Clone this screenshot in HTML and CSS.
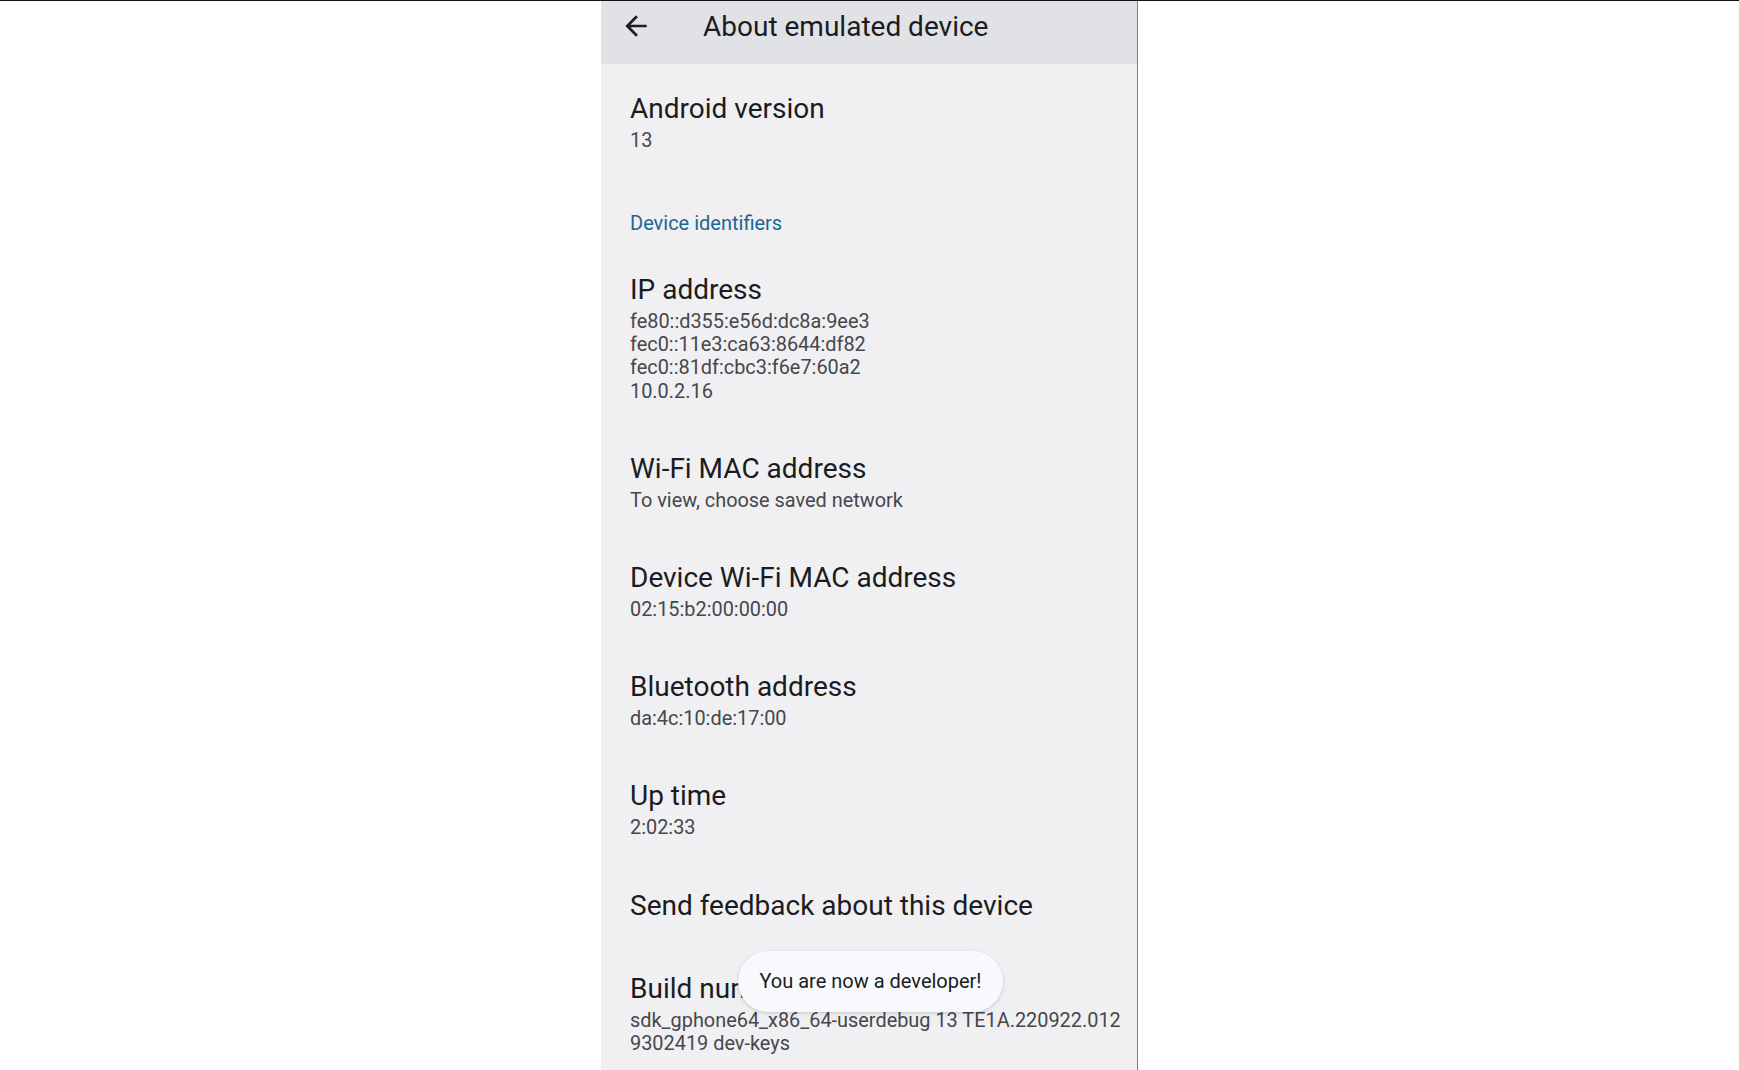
FILE: index.html
```html
<!DOCTYPE html>
<html lang="en">
<head>
<meta charset="utf-8">
<title>About emulated device</title>
<link rel="stylesheet" href="styles.css">
</head>
<body>
<div class="stage">
  <div class="phone">
    <header class="appbar">
      <svg class="back" viewBox="0 0 24 24" aria-hidden="true"><path d="M20 11H7.83l5.59-5.59L12 4l-8 8 8 8 1.41-1.41L7.83 13H20v-2z"/></svg>
      <h1 class="appbar-title">About emulated device</h1>
    </header>
    <main class="list">
      <div class="item">
        <div class="title">Android version</div>
        <div class="summary">13</div>
      </div>
      <div class="category">Device identifiers</div>
      <div class="item">
        <div class="title">IP address</div>
        <div class="summary">fe80::d355:e56d:dc8a:9ee3<br>fec0::11e3:ca63:8644:df82<br>fec0::81df:cbc3:f6e7:60a2<br>10.0.2.16</div>
      </div>
      <div class="item">
        <div class="title">Wi-Fi MAC address</div>
        <div class="summary">To view, choose saved network</div>
      </div>
      <div class="item">
        <div class="title">Device Wi-Fi MAC address</div>
        <div class="summary">02:15:b2:00:00:00</div>
      </div>
      <div class="item">
        <div class="title">Bluetooth address</div>
        <div class="summary">da:4c:10:de:17:00</div>
      </div>
      <div class="item">
        <div class="title">Up time</div>
        <div class="summary">2:02:33</div>
      </div>
      <div class="item single">
        <div class="title">Send feedback about this device</div>
      </div>
      <div class="item">
        <div class="title">Build number</div>
        <div class="summary">sdk_gphone64_x86_64-userdebug 13 TE1A.220922.012<br>9302419 dev-keys</div>
      </div>
    </main>
    <div class="toast">You are now a developer!</div>
  </div>
</div>
</body>
</html>
```
FILE: styles.css
```css
html, body {
  margin: 0;
  padding: 0;
  background: #ffffff;
  overflow: hidden;
}

body {
  font-family: Roboto, "Noto Sans", "Liberation Sans", sans-serif;
  border-top: 1px solid #111111;
  height: 1069px;
}

.stage {
  display: flex;
  justify-content: flex-start;
  padding-left: 601px;
  height: 100%;
}

.phone {
  position: relative;
  width: 536px;
  height: 100%;
  background: #f0f0f2;
  border-right: 1px solid #7d7d80;
  overflow: hidden;
}

.appbar {
  display: flex;
  align-items: flex-start;
  height: 63px;
  box-sizing: border-box;
  padding: 9px 0 0 19px;
  background: #e1e2e5;
}

.back {
  width: 32px;
  height: 32px;
  margin-top: 0;
  fill: #1d1e21;
  flex: none;
}

.appbar-title {
  margin: 2px 0 0 51px;
  font-size: 28px;
  line-height: 30px;
  font-weight: 400;
  color: #1b1c1f;
}

.list {
  padding-top: 5px;
}

.item {
  padding: 25px 8px 26px 29px;
}

.item.single {
  padding-bottom: 28px;
}

.title {
  font-size: 28px;
  line-height: 30px;
  color: #1b1c1f;
}

.summary {
  margin-top: 5px;
  font-size: 19.9px;
  line-height: 23.2px;
  color: #45474c;
  white-space: nowrap;
}

.category {
  padding: 34px 29px 14.5px 29px;
  font-size: 20px;
  line-height: 23.2px;
  font-weight: 400;
  color: #1d6690;
}

.toast {
  position: absolute;
  left: 137px;
  top: 950px;
  width: 265px;
  height: 61px;
  box-sizing: border-box;
  display: flex;
  align-items: center;
  justify-content: center;
  padding-bottom: 1px;
  border-radius: 31px;
  background: #f8f9fc;
  box-shadow: 0 1px 3px rgba(0, 0, 0, 0.12), 0 2px 6px rgba(0, 0, 0, 0.06);
  font-size: 20px;
  color: #1b1c1f;
}
```
